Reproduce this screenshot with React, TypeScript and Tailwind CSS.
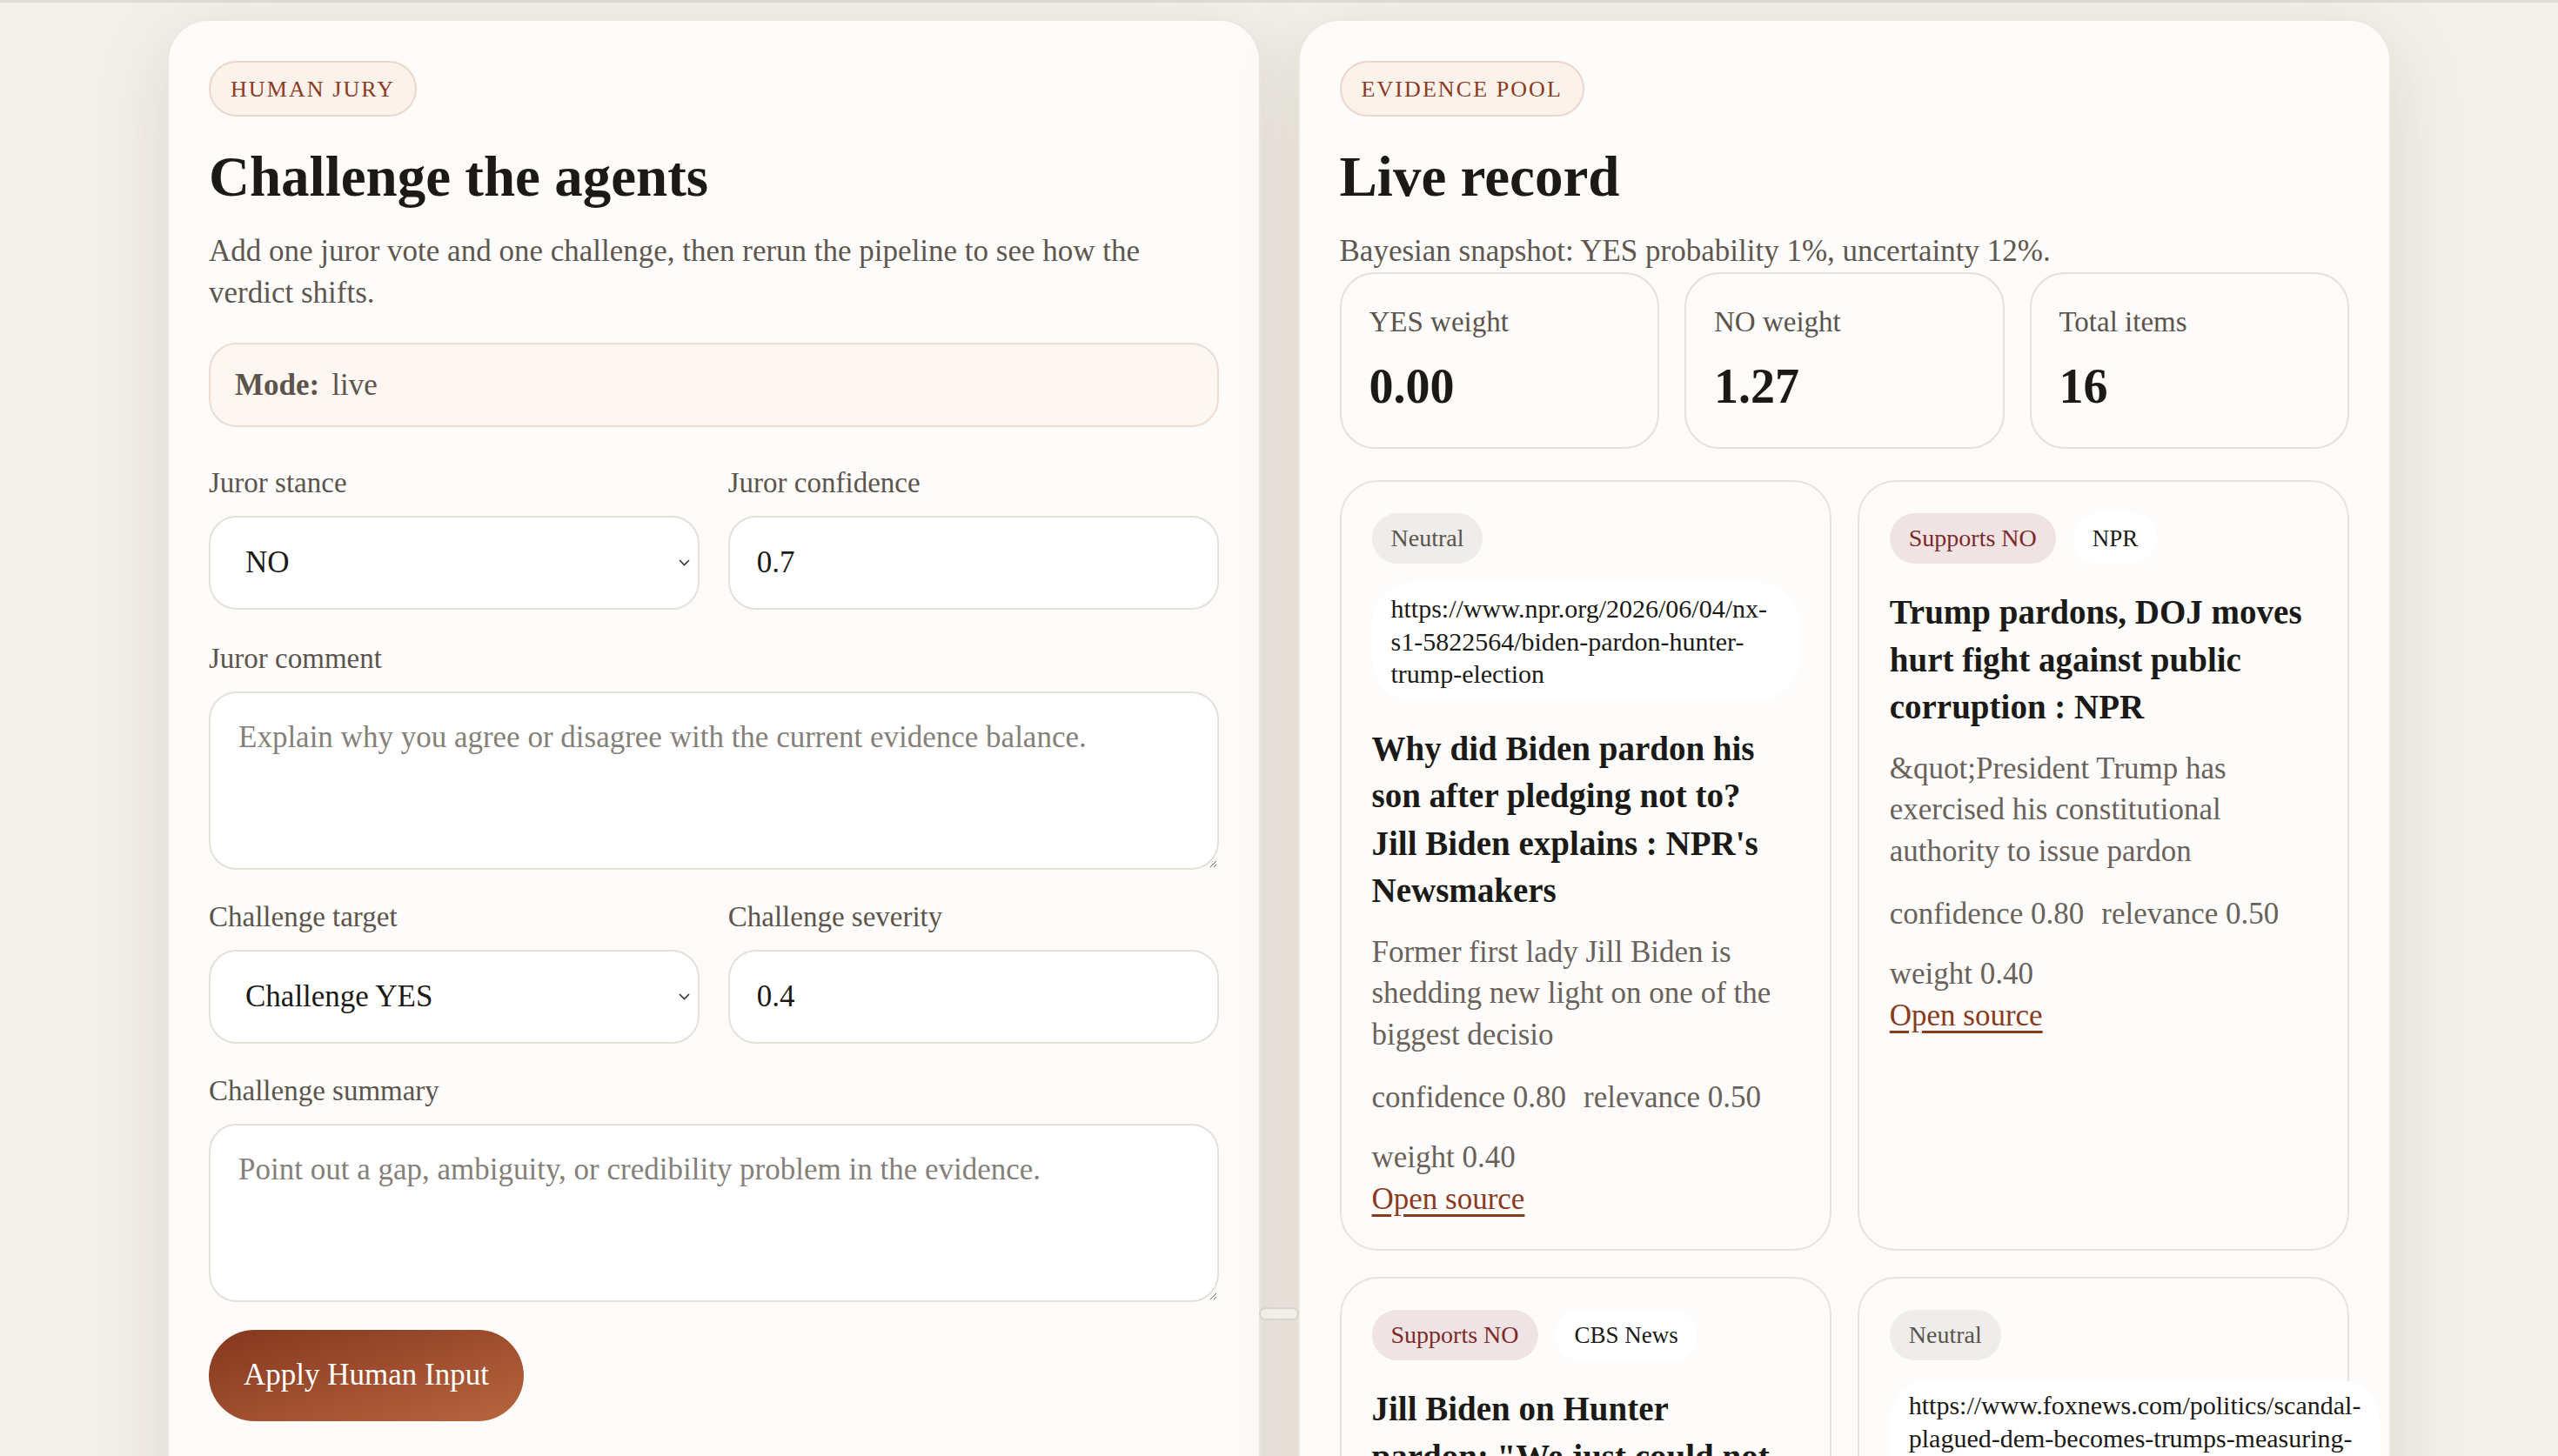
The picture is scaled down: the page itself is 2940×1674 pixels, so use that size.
import type { ReactNode } from 'react';

type Evidence = {
  stance: 'Neutral' | 'Supports NO';
  source: string;
  url?: boolean;
  title: string;
  summary: string;
  confidence: string;
  relevance: string;
  weight: string;
};

const evidence: Evidence[] = [
  {
    stance: 'Neutral',
    source: 'https://www.npr.org/2026/06/04/nx-s1-5822564/biden-pardon-hunter-trump-election',
    url: true,
    title: "Why did Biden pardon his son after pledging not to? Jill\u00a0Biden explains : NPR's Newsmakers",
    summary: 'Former first lady Jill Biden is shedding new light on one of the biggest decisio',
    confidence: '0.80',
    relevance: '0.50',
    weight: '0.40',
  },
  {
    stance: 'Supports NO',
    source: 'NPR',
    title: 'Trump pardons, DOJ moves hurt fight against public corruption : NPR',
    summary: '&quot;President Trump has exercised his constitutional authority to issue pardon',
    confidence: '0.80',
    relevance: '0.50',
    weight: '0.40',
  },
  {
    stance: 'Supports NO',
    source: 'CBS News',
    title: 'Jill Biden on Hunter pardon:\u00a0"We just could not see him be persecuted" - CBS News',
    summary: 'Jill Biden says the decision to pardon her son came after months of',
    confidence: '0.80',
    relevance: '0.50',
    weight: '0.40',
  },
  {
    stance: 'Neutral',
    source: 'https://www.foxnews.com/politics/scandal-plagued-dem-becomes-trumps-measuring-stick-pardons',
    url: true,
    title: 'Scandal-plagued Dem becomes Trump’s measuring stick for pardons',
    summary: 'The president has pointed to the Hunter Biden pardon as a benchmark',
    confidence: '0.80',
    relevance: '0.50',
    weight: '0.40',
  },
];

function Badge({ children }: { children: ReactNode }) {
  return (
    <span className="inline-flex h-[64px] items-center rounded-full border-2 border-[#ecd6ca] bg-[#fcf2ec] px-[23px] text-[26px] uppercase tracking-[0.08em] text-[#8b3a1e]">
      {children}
    </span>
  );
}

function Label({ children }: { children: ReactNode }) {
  return <label className="block text-[33px] leading-[40px] text-[#5c544d]">{children}</label>;
}

function Chevron() {
  return (
    <svg
      className="pointer-events-none absolute right-[11px] top-1/2 -translate-y-1/2"
      width="13"
      height="8"
      viewBox="0 0 13 8"
      fill="none"
    >
      <path d="M1 1l5.5 5.5L12 1" stroke="#3a3632" strokeWidth="1.6" />
    </svg>
  );
}

function SelectField({ value, options }: { value: string; options: string[] }) {
  return (
    <div className="relative mt-[18px]">
      <select
        defaultValue={value}
        className="block h-[108px] w-full appearance-none rounded-[32px] border-2 border-[#e4e0da] bg-white pl-[40px] text-[35px] text-[#1c1a17] outline-none"
      >
        {options.map((o) => (
          <option key={o}>{o}</option>
        ))}
      </select>
      <Chevron />
    </div>
  );
}

function TextField({ value }: { value: string }) {
  return (
    <input
      defaultValue={value}
      className="mt-[18px] block h-[108px] w-full rounded-[32px] border-2 border-[#e4e0da] bg-white pl-[31px] text-[35px] text-[#1c1a17] outline-none"
    />
  );
}

function TextArea({ placeholder }: { placeholder: string }) {
  return (
    <textarea
      placeholder={placeholder}
      className="mt-[18px] block h-[205px] w-full rounded-[32px] border-2 border-[#e4e0da] bg-white px-[32px] pt-[27px] text-[35px] leading-[48px] text-[#1c1a17] outline-none placeholder:text-[#85807a]"
    />
  );
}

function StatCard({ label, value }: { label: string; value: string }) {
  return (
    <div className="rounded-[40px] border-2 border-[#e4e0da] bg-[#fdfcfa] px-[32px] pb-[38px] pt-[35px]">
      <div className="text-[33px] leading-[40px] text-[#5c544d]">{label}</div>
      <div className="mt-[22px] text-[56px] font-bold leading-[64px] text-[#1c1a17]">{value}</div>
    </div>
  );
}

function EvidenceCard({ item }: { item: Evidence }) {
  const stanceClass =
    item.stance === 'Neutral' ? 'bg-[#efedeb] text-[#5a544e]' : 'bg-[#efe3e3] text-[#7b2a2a]';
  return (
    <article className="rounded-[44px] border-2 border-[#e6e2dd] bg-[#fdfcfa] px-[35px] pb-[33px] pt-[36px]">
      <div className="flex flex-wrap gap-x-[20px] gap-y-[22px]">
        <span className={`rounded-full px-[22px] py-[12px] text-[28px] leading-[34px] ${stanceClass}`}>
          {item.stance}
        </span>
        {item.url ? (
          <span className="rounded-[48px] bg-white px-[22px] py-[11px] text-[30px] leading-[37.5px] text-[#1c1a17]">
            {item.source}
          </span>
        ) : (
          <span className="rounded-full bg-white px-[22px] py-[12px] text-[27px] leading-[34px] text-[#1c1a17]">
            {item.source}
          </span>
        )}
      </div>
      <h3 className="mt-[29px] text-[39px] font-bold leading-[54.5px] text-[#1c1a17]">{item.title}</h3>
      <p className="mt-[19px] text-[35px] leading-[47.5px] text-[#6a625a]">{item.summary}</p>
      <div className="mt-[25px] flex flex-wrap gap-x-[20px] gap-y-[21px] text-[35px] leading-[48px] text-[#6a625a]">
        <span>confidence {item.confidence}</span>
        <span>relevance {item.relevance}</span>
        <span>weight {item.weight}</span>
      </div>
      <a href="#" className="block text-[35px] leading-[48px] text-[#8b3a1e] underline underline-offset-[6px]">
        Open source
      </a>
    </article>
  );
}

export default function App() {
  return (
    <div className="h-screen overflow-hidden bg-[#f3f0ea] font-['Liberation_Serif',serif]">
      <div className="h-[3px] bg-[#dedbd7]" />
      <main className="relative grid grid-cols-2 gap-[43px] px-[192px] pt-[19px]">
        {/* Human jury */}
        <section className="rounded-[48px] border-2 border-[#ebe7e1] bg-[#fdfcfa] px-[46px] pb-[60px] pt-[46px] shadow-[0_24px_90px_rgba(90,70,45,0.14)]">
          <Badge>Human jury</Badge>
          <h2 className="mt-[33px] text-[65px] font-bold leading-[72px] text-[#1c1a17]">Challenge the agents</h2>
          <p className="mt-[26px] text-[35px] leading-[48px] text-[#5f574f]">
            Add one juror vote and one challenge, then rerun the pipeline to see how the verdict shifts.
          </p>
          <div className="mt-[33px] rounded-[32px] border-2 border-[#eddcd2] bg-[#fdf6f1] px-[28px] py-[22px] text-[35px] leading-[49px] text-[#5c544d]">
            <span className="mr-[14px] font-bold">Mode:</span>
            <span>live</span>
          </div>

          <div className="mt-[44px] grid grid-cols-2 gap-x-[33px]">
            <div>
              <Label>Juror stance</Label>
              <SelectField value="NO" options={['YES', 'NO']} />
            </div>
            <div>
              <Label>Juror confidence</Label>
              <TextField value="0.7" />
            </div>
          </div>

          <div className="mt-[36px]">
            <Label>Juror comment</Label>
            <TextArea placeholder="Explain why you agree or disagree with the current evidence balance." />
          </div>

          <div className="mt-[34px] grid grid-cols-2 gap-x-[33px]">
            <div>
              <Label>Challenge target</Label>
              <SelectField value="Challenge YES" options={['Challenge YES', 'Challenge NO']} />
            </div>
            <div>
              <Label>Challenge severity</Label>
              <TextField value="0.4" />
            </div>
          </div>

          <div className="mt-[34px]">
            <Label>Challenge summary</Label>
            <TextArea placeholder="Point out a gap, ambiguity, or credibility problem in the evidence." />
          </div>

          <button className="mt-[32px] h-[105px] rounded-full bg-linear-to-br from-[#85371e] to-[#b8663f] px-[40px] text-[35px] text-white">
            Apply Human Input
          </button>
        </section>

        {/* Evidence pool */}
        <section className="rounded-[48px] border-2 border-[#ebe7e1] bg-[#fdfcfa] px-[46px] pb-[60px] pt-[46px] shadow-[0_24px_90px_rgba(90,70,45,0.14)]">
          <Badge>Evidence pool</Badge>
          <h2 className="mt-[33px] text-[65px] font-bold leading-[72px] text-[#1c1a17]">Live record</h2>
          <p className="mt-[26px] text-[35px] leading-[48px] text-[#5f574f]">
            Bayesian snapshot: YES probability 1%, uncertainty 12%.
          </p>
          <div className="grid grid-cols-3 gap-[29px]">
            <StatCard label="YES weight" value="0.00" />
            <StatCard label="NO weight" value="1.27" />
            <StatCard label="Total items" value="16" />
          </div>
          <div className="mt-[36px] grid grid-cols-2 gap-[30px]">
            {evidence.map((item, i) => (
              <EvidenceCard key={i} item={item} />
            ))}
          </div>
        </section>

        {/* drag handle between panels */}
        <div className="absolute left-[1447px] top-[1500px] h-[15px] w-[46px] rounded-full border-2 border-[#d9d4ce] bg-[#f1eee9]" />
      </main>
    </div>
  );
}
